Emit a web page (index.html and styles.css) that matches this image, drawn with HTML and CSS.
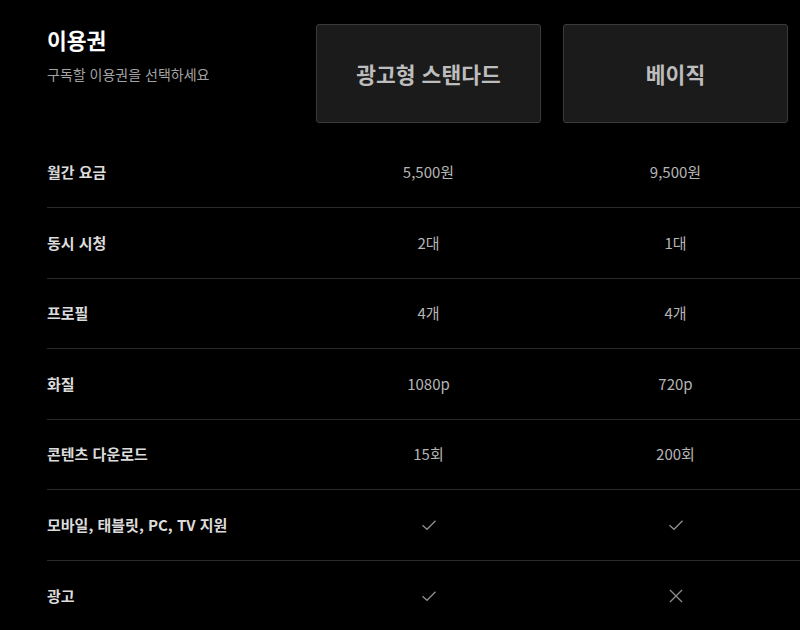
FILE: index.html
```html
<!DOCTYPE html>
<html lang="ko">
<head>
<meta charset="utf-8">
<title>이용권</title>
<link rel="stylesheet" href="styles.css">
</head>
<body>
<div class="page">
  <div class="head grid">
    <div class="intro">
      <h1 class="title">이용권</h1>
      <p class="sub">구독할 이용권을 선택하세요</p>
    </div>
    <div class="plan">광고형 스탠다드</div>
    <div class="plan">베이직</div>
  </div>
  <div class="rows">
    <div class="row grid"><div class="label">월간 요금</div><div class="val">5,500원</div><div class="val">9,500원</div></div>
    <div class="row grid"><div class="label">동시 시청</div><div class="val">2대</div><div class="val">1대</div></div>
    <div class="row grid"><div class="label">프로필</div><div class="val">4개</div><div class="val">4개</div></div>
    <div class="row grid"><div class="label">화질</div><div class="val">1080p</div><div class="val">720p</div></div>
    <div class="row grid"><div class="label">콘텐츠 다운로드</div><div class="val">15회</div><div class="val">200회</div></div>
    <div class="row grid"><div class="label">모바일, 태블릿, PC, TV 지원</div>
      <div class="val"><svg class="ico" viewBox="0 0 16 16"><path d="M1.5 8.2 L6 12.3 L14.5 3.8"/></svg></div>
      <div class="val"><svg class="ico" viewBox="0 0 16 16"><path d="M1.5 8.2 L6 12.3 L14.5 3.8"/></svg></div>
    </div>
    <div class="row grid"><div class="label">광고</div>
      <div class="val"><svg class="ico" viewBox="0 0 16 16"><path d="M1.5 8.2 L6 12.3 L14.5 3.8"/></svg></div>
      <div class="val"><svg class="ico" viewBox="0 0 16 16"><path d="M2 2 L14 14 M14 2 L2 14"/></svg></div>
    </div>
  </div>
</div>
</body>
</html>
```
FILE: styles.css
```css
html, body {
  margin: 0;
  padding: 0;
  background: #000;
  overflow: hidden;
}
body {
  font-family: "Noto Sans CJK KR", "Noto Sans", sans-serif;
  color: #ddd;
}
.page {
  padding: 24px 0 0 47px;
}
.grid {
  display: grid;
  grid-template-columns: 247px 225px 225px;
  column-gap: 22px;
}
.head {
  align-items: start;
}
.intro {
  padding-top: 1px;
}
.title {
  margin: 0;
  font-size: 21.5px;
  line-height: 30px;
  font-weight: 700;
  color: #fff;
}
.sub {
  margin: 9px 0 0;
  font-size: 14px;
  line-height: 20px;
  color: #a3a3a3;
}
.plan {
  box-sizing: border-box;
  height: 99px;
  background: #1b1b1b;
  border: 1px solid #3a3a3a;
  border-radius: 3px;
  display: flex;
  align-items: center;
  justify-content: center;
  font-size: 21.5px;
  font-weight: 700;
  color: #bdbdbd;
}
.rows {
  margin-top: 14.5px;
}
.row {
  box-sizing: border-box;
  height: 70.5px;
  align-items: center;
  border-bottom: 1px solid #2a2a2a;
}
.row:last-child {
  border-bottom: none;
}
.label {
  font-size: 15px;
  font-weight: 700;
  color: #dcdcdc;
  line-height: 20px;
}
.val {
  text-align: center;
  font-size: 15px;
  line-height: 20px;
  color: #b5b5b5;
  display: flex;
  justify-content: center;
  align-items: center;
}
.ico {
  width: 16px;
  height: 16px;
  fill: none;
  stroke: #8f8f8f;
  stroke-width: 1.3;
}
```
